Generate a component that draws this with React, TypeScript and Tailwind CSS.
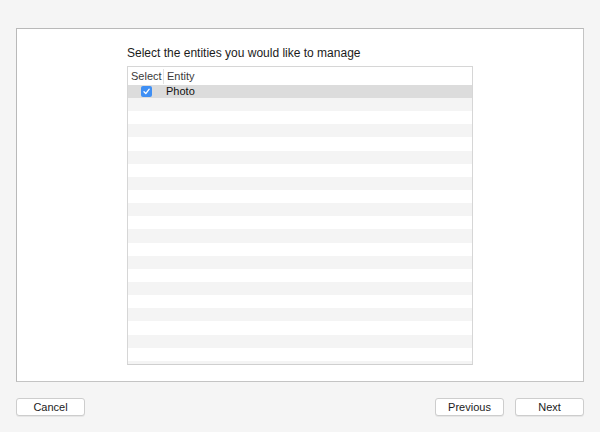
import React from "react";

const font = { fontFamily: '"Liberation Sans", Arial, sans-serif' };

const Check = () => (
  <span className="flex h-[11px] w-[11px] items-center justify-center rounded-[2px] bg-[#3f8ff4]">
    <svg width="9" height="9" viewBox="0 0 9 9">
      <path d="M2 4.8 L3.8 6.6 L7.2 2.2" fill="none" stroke="#fff" strokeWidth="1.3" strokeLinecap="round" strokeLinejoin="round" />
    </svg>
  </span>
);

export default function App() {
  const rows = Array.from({ length: 21 });
  return (
    <div
      className="flex h-[432px] w-[600px] flex-col bg-[#f5f5f5] px-[16px] pt-[28px]"
      style={font}
    >
      <div className="h-[354px] border border-[#b9b9b9] border-r-[#c4c4c4] border-b-[#c4c4c4] bg-white pl-[110px] pt-[16px]">
        <div className="h-[16px] text-[12px] leading-[16px] text-[#1b1b1b]">
          Select the entities you would like to manage
        </div>
        <div className="mt-[5px] flex h-[299px] w-[346px] flex-col overflow-hidden border border-[#d6d6d6] border-b-[#cfcfcf]">
          <div className="flex h-[18px] shrink-0 items-center text-[11px] text-[#3a3a3a]">
            <div className="w-[35px] pl-[3px]">Select</div>
            <div className="h-[15px] w-px bg-[#e2e2e2]" />
            <div className="pl-[3px]">Entity</div>
          </div>
          <div className="flex h-[13px] shrink-0 items-center bg-[#dcdcdc] text-[11px] text-[#111]">
            <div className="flex w-[36px] justify-center pl-[1px]">
              <Check />
            </div>
            <div className="pl-[2px]">Photo</div>
          </div>
          {rows.map((_, i) => (
            <div
              key={i}
              className={`h-[13.15px] shrink-0 ${i % 2 === 0 ? "bg-[#f4f4f4]" : "bg-white"}`}
            />
          ))}
        </div>
      </div>
      <div className="mt-[16px] flex justify-between">
        <button className="h-[18px] w-[69px] rounded-[3px] border border-[#cdcdcd] bg-white text-[11px] leading-[16px] text-[#1b1b1b] shadow-[0_1px_0_rgba(0,0,0,0.06)]">
          Cancel
        </button>
        <div className="flex gap-[11px]">
          <button className="h-[18px] w-[69px] rounded-[3px] border border-[#cdcdcd] bg-white text-[11px] leading-[16px] text-[#1b1b1b] shadow-[0_1px_0_rgba(0,0,0,0.06)]">
            Previous
          </button>
          <button className="h-[18px] w-[69px] rounded-[3px] border border-[#cdcdcd] bg-white text-[11px] leading-[16px] text-[#1b1b1b] shadow-[0_1px_0_rgba(0,0,0,0.06)]">
            Next
          </button>
        </div>
      </div>
    </div>
  );
}
